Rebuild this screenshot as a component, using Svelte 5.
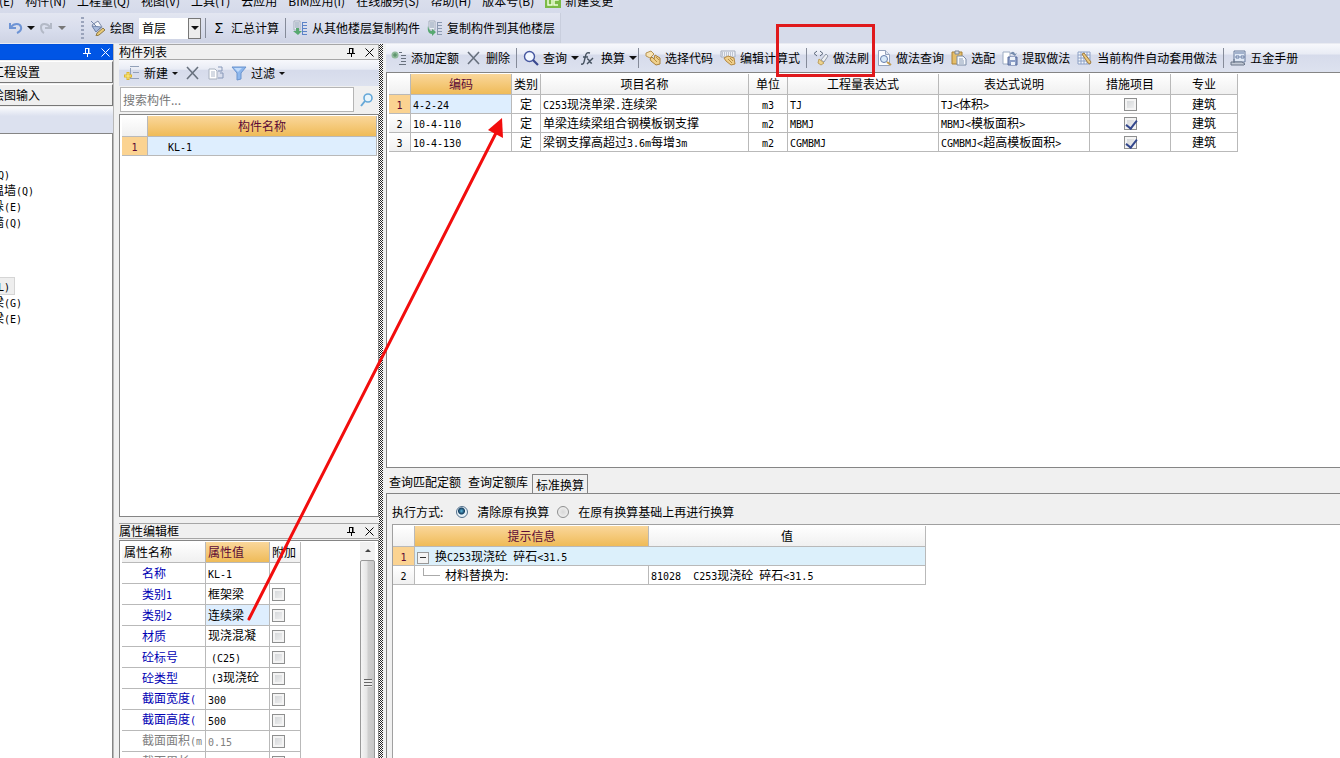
<script>
	const menus = [
		'文件(E)',
		'构件(N)',
		'工程量(Q)',
		'视图(V)',
		'工具(T)',
		'云应用',
		'BIM应用(I)',
		'在线服务(S)',
		'帮助(H)',
		'版本号(B)'
	];

	const tree = ['', '', '墙(Q)', '保温墙(Q)', '墙垛(E)', '幕墙(Q)', '', '', '', '梁(L)', '连梁(G)', '圈梁(E)'];

	const tools = [
		{ icon: 'add', label: '添加定额' },
		{ icon: 'cross', label: '删除' },
		null,
		{ icon: 'search', label: '查询', menu: true },
		{ icon: 'fx', label: '换算', menu: true },
		null,
		{ icon: 'pick', label: '选择代码' },
		{ icon: 'calc', label: '编辑计算式' },
		null,
		{ icon: 'brush', label: '做法刷' },
		{ icon: 'lookup', label: '做法查询' },
		{ icon: 'paste', label: '选配' },
		{ icon: 'extract', label: '提取做法' },
		{ icon: 'auto', label: '当前构件自动套用做法' },
		null,
		{ icon: 'book', label: '五金手册' }
	];

	let quotas = $state([
		{ code: '4-2-24', kind: '定', name: 'C253现浇单梁.连续梁', unit: 'm3', expr: 'TJ', desc: 'TJ<体积>', measure: false, major: '建筑' },
		{ code: '10-4-110', kind: '定', name: '单梁连续梁组合钢模板钢支撑', unit: 'm2', expr: 'MBMJ', desc: 'MBMJ<模板面积>', measure: true, major: '建筑' },
		{ code: '10-4-130', kind: '定', name: '梁钢支撑高超过3.6m每增3m', unit: 'm2', expr: 'CGMBMJ', desc: 'CGMBMJ<超高模板面积>', measure: true, major: '建筑' }
	]);

	let props = $state([
		{ name: '名称', value: 'KL-1' },
		{ name: '类别1', value: '框架梁', extra: false },
		{ name: '类别2', value: '连续梁', extra: false },
		{ name: '材质', value: '现浇混凝', extra: false, wrap: true },
		{ name: '砼标号', value: '(C25)', extra: false, indent: true },
		{ name: '砼类型', value: '(3现浇砼', extra: false, wrap: true, indent: true },
		{ name: '截面宽度(', value: '300', extra: false, wrapName: true },
		{ name: '截面高度(', value: '500', extra: false, wrapName: true },
		{ name: '截面面积(m', value: '0.15', extra: false, wrapName: true, muted: true },
		{ name: '截面周长(m', value: '1.6', extra: false, wrapName: true, muted: true }
	]);

	let floor = $state('首层');
	let keyword = $state('');
	let mode = $state('clear');
	let selectedProp = $state(2);

	// half-width runs are set in the narrow mono face
	function runs(text) {
		return text.match(/[\x20-\x7e]+|[^\x20-\x7e]+/g) ?? [];
	}
</script>

{#snippet mixed(text)}
	{#each runs(text) as run}{#if run.charCodeAt(0) < 127}<span class="half">{run}</span>{:else}{run}{/if}{/each}
{/snippet}

{#snippet icon(name)}
	<svg class="icon" viewBox="0 0 16 16" width="16" height="16" aria-hidden="true">
		{#if name === 'add'}
			<circle cx="4" cy="5" r="3.5" fill="#8fb99a" />
			<path d="M4 3v4M2 5h4" stroke="#4f8a61" />
			<path d="M8 2.5h3M10 5.5h5M10 8.5h5M10 11.5h5M8 14.5h7" stroke="#68717d" />
		{:else if name === 'cross'}
			<path d="M2 2l11 12M13 2L2 14" stroke="#68717e" stroke-width="1.6" fill="none" />
		{:else if name === 'search'}
			<circle cx="6.5" cy="6.5" r="5" fill="#f2f7ff" stroke="#4657a0" stroke-width="1.4" />
			<path d="M10 10l5 5" stroke="#39488f" stroke-width="2.2" />
		{:else if name === 'fx'}
			<path d="M0 14c3 1 3-2 4-6s1-6 5-5M2 7h5M6 9c3-1 2 5 5 4M12 8l-6 6" fill="none" stroke="#45515f" stroke-width="1.4" />
		{:else if name === 'pick'}
			<path d="M1 3l5-2 3 3-4 4-4-2z" fill="#f7e3b4" stroke="#b79453" />
			<path d="M5 9l2-2 2 2 1-4 5 3v6l-4 1-5-4z" fill="#efd08c" stroke="#aa8039" />
			<path d="M9 9l3 3M11 7l3 3" stroke="#b78e43" />
		{:else if name === 'calc'}
			<path d="M1 1h14v6H1z" fill="#eef1f7" stroke="#a5adbd" />
			<path d="M2 3h12M2 5h12" stroke="#8f99af" stroke-dasharray="1 1" />
			<path d="M4 8l4-2 6 2 1 6-4 1-5-4z" fill="#efcf8c" stroke="#b48842" />
			<path d="M8 9l4 4M10 8l3 3" stroke="#b78e43" />
		{:else if name === 'brush'}
			<path d="M4 1L1 3.500l3 2.500M7 1l3 2.500L7 6" fill="none" stroke="#5a6678" />
			<path d="M13 4l2 2-4 6-3-2z" fill="#eef0f3" stroke="#929baa" />
			<path d="M6 9l5 4-3 2-3-2z" fill="#eed38f" stroke="#bea15e" />
		{:else if name === 'lookup'}
			<path d="M2.500 .5h7l4 4v11h-11z" fill="#fbfcfe" stroke="#94a2bb" />
			<path d="M9.500 .5v4h4" fill="#dce4f0" stroke="#94a2bb" />
			<circle cx="8" cy="9" r="3.500" fill="#d7e9f8" stroke="#647caa" />
			<path d="M11 12l4 3" stroke="#c29b50" stroke-width="2" />
		{:else if name === 'paste'}
			<path d="M1 2h10v12H1z" fill="#e4bd69" stroke="#aa8238" />
			<path d="M4 1h4v3H4z" fill="#d7dce3" stroke="#7d8797" />
			<path d="M6 6h6l3 3v6H6z" fill="#f5f8fc" stroke="#7b8ba6" />
			<path d="M8 9h4M8 11h5M8 13h5" stroke="#8a9bb5" />
		{:else if name === 'extract'}
			<path d="M1 2h7v12H1z" fill="#fff" stroke="#9cabc2" />
			<path d="M6 7h9v8H6z" fill="#8d9fc7" stroke="#566b9c" />
			<path d="M8 7h5v3H8zM9 12h4v3H9z" fill="#edf2f9" />
			<path d="M8 4c2-3 4-3 5 0l2-1-2 3-3-2h2" fill="#758bad" />
		{:else if name === 'auto'}
			<path d="M1 2h12v12H1zM1 5h12M1 8h12M1 11h12M4 2v12M7 2v12M10 2v12" fill="#f3f7fd" stroke="#8ca0c5" />
			<path d="M5 4l2-1 7 9-1 2-2-1z" fill="#edcb7e" stroke="#a17c3e" />
		{:else if name === 'book'}
			<path d="M4 1h11v11H4z" fill="#dfe8f5" stroke="#687b9b" />
			<path d="M5 3h9M6 6h3v2H6zM11 6h3v2h-3z" stroke="#647ba3" fill="#fff" />
			<path d="M1 12h11l3 2-1 1H1zM4 9v4" fill="#c3cad6" stroke="#687487" />
		{:else if name === 'paint'}
			<path d="M2 5l6-4 4 6-6 5z" fill="#f4f6fa" stroke="#7e8ca8" />
			<path d="M1 1l5 5M2 6l9 1-5 5z" fill="#a9bbdc" stroke="#7185ab" />
			<path d="M7 13l6-5 2 2-6 5-3 1z" fill="#eacb78" stroke="#8d7a4a" />
		{:else if name === 'from' || name === 'to'}
			<path d="M2 1h6v9H2z" fill="#edf1f6" stroke="#a4adbc" />
			<path d="M3 3h4M3 5h4M3 7h4" stroke="#8999b0" />
			<path d="M10 2.500h5M10 5.500h5M10 8.500h5M10 11.500h5M10 14.500h5M10.500 2v13" stroke={name === 'from' ? '#5c83c8' : '#8b99b0'} />
			<path d={name === 'from' ? 'M4 8h3v3h3l-4 4-5-4h3z' : 'M1 6c1 4 2 5 4 5V9l4 3-4 4v-2C2 14 0 11 1 6z'} fill="#57a870" />
		{:else if name === 'new'}
			<path d="M9 1.500h6M9 7.500h6M6 13.500h9M6.500 3v10M6 1.500h3" stroke="#92a0b8" />
			<path d="M4 7v8M0 11h8" stroke="#dcb52e" stroke-width="3" />
			<path d="M4 8v6M1 11h6" stroke="#fff087" />
		{:else if name === 'copy'}
			<path d="M1 4h6l2 2v8H1z" fill="#fff" stroke="#a8b1bf" />
			<path d="M3 7h4M3 9h4M3 11h4" stroke="#abb6c8" />
			<path d="M10 2h4v4h-4M12 8h3v5h-5" fill="none" stroke="#8798b8" />
		{:else if name === 'filter'}
			<path d="M1 2h14l-5 6v6l-4 1V8z" fill="#8db7ed" stroke="#6b94ce" />
			<path d="M3 3h8L7 7z" fill="#c2dcfb" />
		{:else if name === 'undo'}
			<path d="M3 3v5h6M4 7c3-4 9-4 10 0s-2 5-4 6" fill="none" stroke="#6e94d5" stroke-width="2" />
		{:else if name === 'redo'}
			<path d="M13 3v5H7M12 7C9 3 3 3 3 7s1 5 3 6" fill="none" stroke="#b3b9c6" stroke-width="2" />
		{:else if name === 'find'}
			<circle cx="9" cy="6" r="4" fill="#e7f5fd" stroke="#65a8d8" stroke-width="1.6" />
			<path d="M6 9l-4 5" stroke="#65a8d8" stroke-width="2" />
		{:else if name === 'change'}
			<path d="M0 0h16v15H0z" fill="#7abb46" />
			<path d="M3 2v10h4V2M9 4h4v3H9v5h4" fill="none" stroke="#efffdc" stroke-width="1.500" />
		{/if}
	</svg>
{/snippet}

{#snippet winButtons()}
	<button class="win" aria-label="固定">
		<svg viewBox="0 0 9 9" width="9" height="9"><path d="M2.500 0v5M2 .5h4M6 0v5M5.500 0v5M0 5.500h8M4.500 6v3" stroke="currentColor" fill="none" /></svg>
	</button>
	<button class="win" aria-label="关闭">
		<svg viewBox="0 0 9 9" width="9" height="9"><path d="M.5 .5l8 8M8.500 .5l-8 8" stroke="currentColor" fill="none" /></svg>
	</button>
{/snippet}

<div class="viewport">
	<div class="shell">
		<nav class="menubar">
			{#each menus as menu}
				<button>{menu}</button>
			{/each}
			<button class="change">{@render icon('change')}新建变更</button>
		</nav>

		<div class="mainbar">
			<button aria-label="撤销">{@render icon('undo')}<i class="caret"></i></button>
			<button aria-label="重做">{@render icon('redo')}<i class="caret dim"></i></button>
			<span class="grip"></span>
			<button>{@render icon('paint')}绘图</button>
			<label class="floor">
				<select bind:value={floor} aria-label="楼层">
					<option>首层</option>
				</select>
				<span class="drop"><i class="caret"></i></span>
			</label>
			<span class="sep"></span>
			<button class="sum"><b>Σ</b>汇总计算</button>
			<span class="sep"></span>
			<button>{@render icon('from')}从其他楼层复制构件</button>
			<button>{@render icon('to')}复制构件到其他楼层</button>
		</div>

		<div class="work">
			<aside class="modules">
				<header class="title active">{@render winButtons()}</header>
				<button class="module">工程设置</button>
				<button class="module">绘图输入</button>
				<div class="band"></div>
				<ul class="tree">
					{#each tree as node}
						<li><span class:picked={node === '梁(L)'}>{@render mixed(node)}</span></li>
					{/each}
				</ul>
			</aside>

			<section class="side">
				<div class="list-pane">
					<header class="title"><h2>构件列表</h2>{@render winButtons()}</header>
					<div class="toolbar small">
						<button>{@render icon('new')}新建<i class="caret tiny"></i></button>
						<button aria-label="删除">{@render icon('cross')}</button>
						<button aria-label="复制">{@render icon('copy')}</button>
						<button>{@render icon('filter')}过滤<i class="caret tiny"></i></button>
					</div>
					<div class="search">
						<input type="text" aria-label="搜索构件" placeholder="搜索构件..." bind:value={keyword} />
						<button aria-label="搜索">{@render icon('find')}</button>
					</div>
					<div class="sheet">
						<table class="grid members">
							<colgroup><col class="c26" /><col /></colgroup>
							<thead><tr><th></th><th class="hot">构件名称</th></tr></thead>
							<tbody><tr><th class="hot">{@render mixed('1')}</th><td class="sel">{@render mixed('KL-1')}</td></tr></tbody>
						</table>
					</div>
				</div>

				<div class="prop-pane">
					<header class="title"><h2>属性编辑框</h2>{@render winButtons()}</header>
					<div class="prop-sheet">
						<table class="grid props">
							<colgroup><col class="c84" /><col class="c64" /><col class="c31" /></colgroup>
							<thead><tr><th>属性名称</th><th class="hot">属性值</th><th>附加</th></tr></thead>
							<tbody>
								{#each props as prop, i}
									<tr class:muted={prop.muted} onclick={() => (selectedProp = i)}>
										<td class="key" class:high={prop.wrapName}>{@render mixed(prop.name)}</td>
										<td class:sel={selectedProp === i} class:high={prop.wrap} class:indent={prop.indent}>{@render mixed(prop.value)}</td>
										<td>
											{#if prop.extra !== undefined}
												<input type="checkbox" aria-label={prop.name} bind:checked={prop.extra} />
											{/if}
										</td>
									</tr>
								{/each}
							</tbody>
						</table>
						<div class="scroll">
							<i class="up"></i>
							<div class="thumb"><i></i></div>
						</div>
					</div>
				</div>
			</section>

			<div class="splitter"></div>

			<main>
				<div class="toolbar">
					{#each tools as tool}
						{#if tool}
							<button class:has-menu={tool.menu}>
								{@render icon(tool.icon)}{tool.label}{#if tool.menu}<i class="caret"></i>{/if}
							</button>
						{:else}
							<span class="sep"></span>
						{/if}
					{/each}
				</div>

				<div class="quota-sheet">
					<table class="grid quotas">
						<colgroup>
							<col class="c22" /><col class="c101" /><col class="c29" /><col class="c208" /><col class="c39" />
							<col class="c151" /><col class="c151" /><col class="c81" /><col class="c67" />
						</colgroup>
						<thead>
							<tr>
								<th></th><th class="hot">编码</th><th>类别</th><th>项目名称</th><th>单位</th>
								<th>工程量表达式</th><th>表达式说明</th><th>措施项目</th><th>专业</th>
							</tr>
						</thead>
						<tbody>
							{#each quotas as q, i}
								<tr>
									<th class:hot={i === 0}>{@render mixed(String(i + 1))}</th>
									<td class:sel={i === 0}>{@render mixed(q.code)}</td>
									<td class="mid">{q.kind}</td>
									<td>{@render mixed(q.name)}</td>
									<td class="mid">{@render mixed(q.unit)}</td>
									<td>{@render mixed(q.expr)}</td>
									<td>{@render mixed(q.desc)}</td>
									<td class="mid"><input type="checkbox" aria-label="措施项目 {i + 1}" bind:checked={q.measure} /></td>
									<td class="mid">{q.major}</td>
								</tr>
							{/each}
						</tbody>
					</table>
				</div>

				<div class="convert">
					<div class="tabs">
						<button>查询匹配定额</button>
						<button>查询定额库</button>
						<button class="current">标准换算</button>
					</div>
					<div class="tab-body">
						<div class="modes">
							<span>执行方式:</span>
							<label><input type="radio" name="mode" value="clear" bind:group={mode} />清除原有换算</label>
							<label><input type="radio" name="mode" value="append" bind:group={mode} />在原有换算基础上再进行换算</label>
						</div>
						<div class="hint-sheet">
							<table class="grid hints">
								<colgroup><col class="c22" /><col class="c234" /><col class="c277" /></colgroup>
								<thead><tr><th></th><th class="hot">提示信息</th><th>值</th></tr></thead>
								<tbody>
									<tr>
										<th class="hot">{@render mixed('1')}</th>
										<td colspan="2" class="group"><button class="fold" aria-label="折叠"></button>{@render mixed('换C253现浇砼 碎石<31.5')}</td>
									</tr>
									<tr>
										<th>{@render mixed('2')}</th>
										<td class="child"><i class="branch"></i>材料替换为:</td>
										<td>{@render mixed('81028  C253现浇砼 碎石<31.5')}</td>
									</tr>
								</tbody>
							</table>
						</div>
					</div>
				</div>
			</main>
		</div>
	</div>

	<svg class="marks" width="900" height="640" aria-hidden="true">
		<path d="M249 619L497 131" stroke="#f20d0d" stroke-width="3" stroke-linecap="round" />
		<path d="M502 118l1 20-15-8z" fill="#f20d0d" />
		<rect x="777.500" y="25.500" width="96" height="50" fill="none" stroke="#e0191c" stroke-width="3" />
	</svg>
</div>

<style>
	:global(body) {
		margin: 0;
		overflow: hidden;
	}
	.viewport {
		position: relative;
		height: 100vh;
		overflow: hidden;
		background: #d6dbea;
		color: #000;
		font: 12px/16px 'Noto Sans CJK SC', sans-serif;
	}
	.viewport * {
		box-sizing: border-box;
	}
	/* the window is dragged partly off the top left corner */
	.shell {
		display: flex;
		flex-direction: column;
		height: calc(100vh + 14px);
		margin: -14px 0 0 -60px;
		white-space: nowrap;
	}
	button,
	input,
	select {
		margin: 0;
		padding: 0;
		border: 0;
		background: none;
		color: inherit;
		font: inherit;
	}
	button {
		display: flex;
		align-items: center;
		gap: 4px;
		white-space: nowrap;
	}
	.icon {
		flex: none;
	}
	.half {
		font: 10px/10px 'DejaVu Sans Mono', monospace;
		white-space: pre;
	}
	.caret {
		border: 4px solid transparent;
		border-top-color: #111;
		border-bottom: 0;
	}
	.caret.tiny {
		border-width: 3px 3px 0;
	}
	.caret.dim {
		border-top-color: #777;
	}
	.sep {
		width: 1px;
		height: 20px;
		margin: 0 -1px;
		background: #858b99;
	}

	.menubar {
		display: flex;
		align-self: flex-start;
		gap: 11px;
		height: 27px;
		padding: 7px 6px 4px 35px;
		background: linear-gradient(#dfe3ef, #d5daea);
	}
	.mainbar {
		display: flex;
		align-items: center;
		align-self: flex-start;
		gap: 7px;
		height: 30px;
		padding: 0 5px 0 67px;
		border-right: 1px solid #c9cedd;
		background: linear-gradient(#e3e6f1, #d7dcec 60%, #ced3e4);
	}
	.mainbar > button:nth-child(-n + 2) {
		gap: 4px;
		margin-right: -4px;
	}
	.grip {
		width: 3px;
		height: 22px;
		margin: 0 -1px 0 12px;
		background: repeating-linear-gradient(#9ba4bb 0 2px, transparent 2px 4px);
	}
	.floor {
		display: flex;
		width: 62px;
		height: 21px;
		margin: 0 -2px;
		background: #fff;
	}
	.floor select {
		flex: 1;
		min-width: 0;
		padding-left: 3px;
		appearance: none;
	}
	.drop {
		display: flex;
		align-items: center;
		justify-content: center;
		width: 13px;
		border: 1px solid #777;
		background: #ececec;
	}
	.sum {
		gap: 7px;
		padding-left: 2px;
	}
	.sum b {
		width: 10px;
		font: 14px/16px 'Liberation Sans', sans-serif;
	}

	.work {
		display: flex;
		flex: 1;
		min-height: 0;
		background: #f0f0f0;
		border-top: 1px solid #e9ebf2;
	}
	.title {
		display: flex;
		flex: none;
		align-items: center;
		gap: 9px;
		height: 16px;
		padding-right: 4px;
		border: 1px solid #a6a6a6;
		border-left: 0;
		background: #f0f0f0;
	}
	.title h2 {
		flex: 1;
		margin: 0;
		font-size: 12px;
		font-weight: 400;
		line-height: 14px;
	}
	.title.active {
		justify-content: flex-end;
		padding-right: 2px;
		border-color: #0050dc;
		background: #0055e5;
		color: #fff;
	}

	.modules {
		display: flex;
		flex-direction: column;
		flex: none;
		width: 174px;
		border-right: 1px solid #b8b8b8;
	}
	.module {
		height: 22px;
		margin-top: 1px;
		padding-left: 51px;
		border: 1px solid #fff;
		border-right-color: #777;
		border-bottom-color: #777;
		background: #efefef;
	}
	.band {
		height: 26px;
		margin-top: 1px;
		background: linear-gradient(#fafbfd, #dce1ef 35%, #dce1ef);
	}
	.tree {
		flex: 1;
		margin: 0;
		padding: 0 0 0 40px;
		border: solid #858585;
		border-width: 1px 1px 0 0;
		background: #fff;
		list-style: none;
	}
	.tree li {
		height: 16px;
	}
	.tree span {
		display: inline-block;
	}
	.tree .picked {
		padding-right: 4px;
		background: #eee;
		box-shadow: 0 0 0 1px #d5d5d5;
	}

	.side {
		display: flex;
		flex-direction: column;
		flex: none;
		gap: 6px;
		width: 260px;
		margin-left: 5px;
	}
	.list-pane,
	.prop-pane {
		display: flex;
		flex-direction: column;
		min-height: 0;
	}
	.list-pane {
		flex: 1;
	}
	.prop-pane {
		flex: 0 0 235px;
	}
	.toolbar {
		display: flex;
		flex: none;
		align-items: center;
		gap: 7px;
		height: 28px;
		padding-left: 5px;
		background: linear-gradient(#f7f8fc, #e9ecf5 35%, #d6dbeb 40%, #dde2ef);
	}
	.toolbar.small {
		height: 26px;
	}
	.search {
		display: flex;
		height: 25px;
		margin: 1px 0 2px 1px;
		background: #f0f0f0;
	}
	.has-menu {
		margin-right: -5px;
	}
	.search input {
		flex: 1;
		min-width: 0;
		padding-left: 2px;
		border: 1px solid #b5b5b5;
		background: #fff;
	}
	.search input::placeholder {
		color: #777;
	}
	.search button {
		padding: 0 4px 0 5px;
	}
	.sheet {
		flex: 1;
		padding: 1px 1px 0 2px;
		border: 1px solid #858585;
		background: #fff;
	}

	.grid {
		border-spacing: 0;
		table-layout: fixed;
		background: #fff;
	}
	.grid th,
	.grid td {
		height: 19px;
		padding: 0 2px;
		overflow: hidden;
		border: solid #b9b9b9;
		border-width: 0 1px 1px 0;
		line-height: 16px;
		text-align: left;
		font-weight: 400;
	}
	.grid th {
		padding: 0;
		background: linear-gradient(#fff, #f0f0f0);
		text-align: center;
	}
	.grid thead th {
		height: 21px;
	}
	.grid .hot {
		background: linear-gradient(#fad79b, #efbb58);
		color: #5c0a35;
	}
	.grid tbody .hot {
		background: #fbd391;
	}
	.grid .sel {
		background: #deeefe;
	}
	.grid .mid {
		text-align: center;
	}
	.members {
		width: 100%;
	}
	.members td {
		padding-left: 20px;
	}
	.c22 { width: 22px; }
	.c26 { width: 26px; }
	.c29 { width: 29px; }
	.c31 { width: 31px; }
	.c39 { width: 39px; }
	.c64 { width: 64px; }
	.c67 { width: 67px; }
	.c81 { width: 81px; }
	.c84 { width: 84px; }
	.c101 { width: 101px; }
	.c151 { width: 151px; }
	.c208 { width: 208px; }
	.c234 { width: 234px; }
	.c277 { width: 277px; }

	.prop-sheet {
		display: flex;
		flex: 1;
		justify-content: space-between;
		min-height: 0;
		margin-top: 1px;
		padding: 1px 3px 0 2px;
		overflow: hidden;
		border: solid #858585;
		border-width: 1px 1px 0;
		background: #fff;
	}
	.props {
		width: 179px;
		height: 231px;
	}
	.grid.props th,
	.grid.props td {
		height: 21px;
	}
	.grid.props th {
		padding-left: 2px;
		text-align: left;
	}
	.grid.props .key {
		padding-left: 20px;
		color: #0000b4;
	}
	.grid.props .high {
		padding-bottom: 3px;
		line-height: 14px;
	}
	.grid.props .indent {
		padding-left: 5px;
	}
	.grid.props .muted td {
		color: #808080;
	}
	.scroll {
		display: flex;
		flex-direction: column;
		align-items: center;
		width: 15px;
		height: 420px;
		background: #f1f1f1;
	}
	.up {
		margin: 7px 0 8px;
		border: 3px solid transparent;
		border-top: 0;
		border-bottom-color: #444;
	}
	.thumb {
		display: flex;
		align-items: flex-start;
		justify-content: center;
		width: 15px;
		height: 240px;
		padding-top: 118px;
		border: 1px solid #999;
		border-radius: 2px;
		background: linear-gradient(90deg, #f5f5f5, #e5e5e5 45%, #cfcfcf 55%, #c7c7c7);
	}
	.thumb i {
		width: 8px;
		height: 8px;
		background: repeating-linear-gradient(#666 0 1px, #eee 1px 3px);
	}

	input[type='checkbox'] {
		display: block;
		width: 13px;
		height: 13px;
		border: 1px solid #8e8f8f;
		background: linear-gradient(135deg, #cfd2d5, #f4f4f4);
		box-shadow: inset 0 0 0 2px #f4f4f4;
		appearance: none;
	}
	.mid input[type='checkbox'] {
		margin: 0 auto;
	}
	input[type='checkbox']:checked::after {
		display: block;
		width: 5px;
		height: 9px;
		margin: 0 0 0 3px;
		border: solid #33478c;
		border-width: 0 2px 2px 0;
		content: '';
		transform: rotate(38deg);
	}
	input[type='radio'] {
		width: 12px;
		height: 12px;
		border: 1px solid #8e8f8f;
		border-radius: 50%;
		background: radial-gradient(#d8d8d8, #f6f6f6);
		appearance: none;
	}
	input[type='radio']:checked {
		border-color: #53708c;
		background: radial-gradient(circle at 45% 40%, #5fb8dc, #123c5e 3px, #e6f1f7 4px);
	}

	.splitter {
		flex: none;
		width: 4px;
		background: repeating-conic-gradient(#222 0 25%, #fff 0 50%) 0 0 / 2px 2px;
	}
	main {
		display: flex;
		flex-direction: column;
		flex: 1;
		min-width: 0;
		margin-left: 3px;
	}
	.quota-sheet {
		flex: 1;
		min-height: 0;
		padding: 1px 1px 1px 2px;
		border: solid #858585;
		border-width: 1px 0 1px 1px;
		background: #fff;
	}
	.quotas {
		width: 849px;
	}
	.convert {
		display: flex;
		flex: 0 0 290px;
		flex-direction: column;
	}
	.tabs {
		display: flex;
		align-items: flex-end;
		gap: 7px;
		height: 25px;
		padding-left: 3px;
	}
	.tabs button {
		height: 22px;
	}
	.tabs .current {
		height: 19px;
		margin-left: -3px;
		padding: 2px 3px 0;
		border: 1px solid #858585;
		border-bottom: 0;
	}
	.tab-body {
		display: flex;
		flex: 1;
		flex-direction: column;
		padding-left: 5px;
		border: solid #858585;
		border-width: 1px 0 0 1px;
	}
	.modes {
		display: flex;
		align-items: center;
		gap: 8px;
		height: 30px;
		padding-top: 6px;
	}
	.modes span {
		margin-right: 5px;
	}
	.modes label {
		display: flex;
		align-items: center;
		gap: 9px;
	}
	.hint-sheet {
		flex: 1;
		padding-top: 1px;
		border: solid #a0a0a0;
		border-width: 1px 0 0 1px;
		background: #fff;
	}
	.hints {
		width: 533px;
	}
	.grid .group {
		background: #dcf0fb;
	}
	.fold {
		display: inline-flex;
		justify-content: center;
		width: 12px;
		height: 12px;
		margin-right: 6px;
		border: 1px solid #999;
		background: #f4f4f4;
		vertical-align: middle;
	}
	.fold::before {
		width: 6px;
		height: 1px;
		background: #333;
		content: '';
	}
	.branch {
		display: inline-block;
		width: 17px;
		height: 8px;
		margin: 0 5px 0 6px;
		border: solid #aaa;
		border-width: 0 0 1px 1px;
		vertical-align: 4px;
	}
	.marks {
		position: absolute;
		top: 0;
		left: 0;
		pointer-events: none;
	}
</style>
